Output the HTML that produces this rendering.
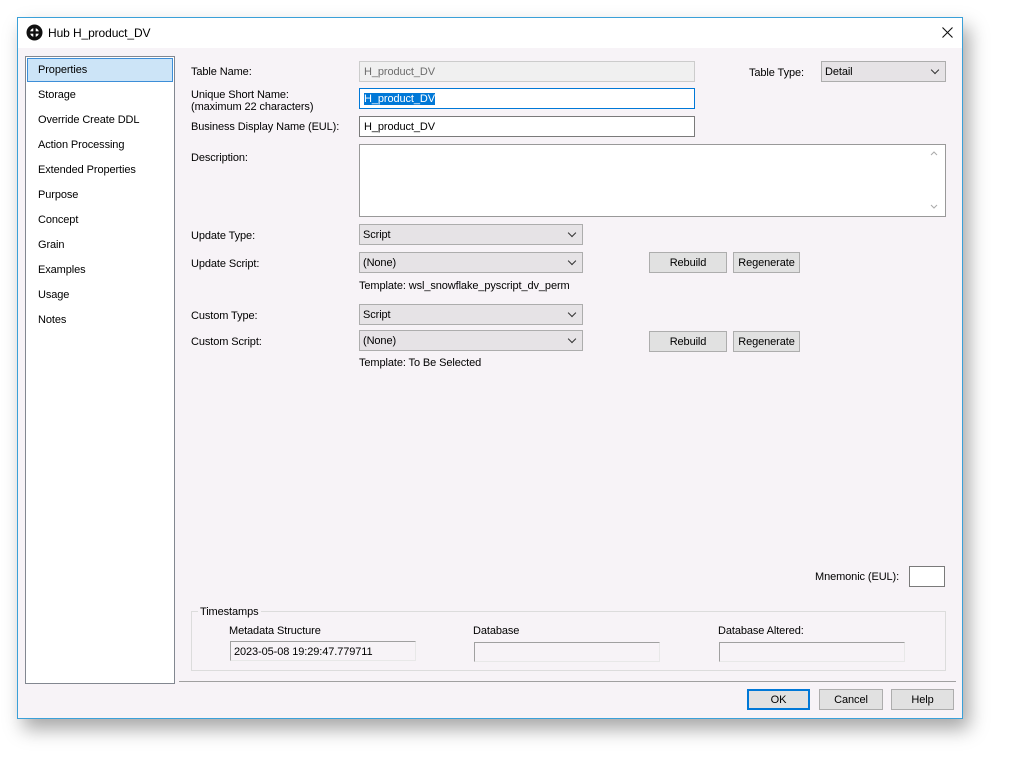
<!DOCTYPE html>
<html><head><style>
*{box-sizing:border-box;margin:0;padding:0}
body{width:1011px;height:767px;background:#fff;position:relative;overflow:hidden;font-family:"Liberation Sans",sans-serif;font-size:11px;color:#000;letter-spacing:-0.1px}
.a{position:absolute;white-space:nowrap}
#win{position:absolute;left:17px;top:17px;width:946px;height:702px;border:1px solid #3aa0d8;background:#f7f3f7;box-shadow:6px 10px 18px rgba(0,0,0,.35)}
.inp{position:absolute;background:#fff;border:1px solid #7a7a7a;height:21px;padding:4px 4px 0}
.sel{position:absolute;background:#e6e3e6;border:1px solid #adadad;height:21px;padding:4px 3px 0}
.sel:after{content:"";position:absolute;right:7px;top:5px;width:5px;height:5px;border-right:1.2px solid #333;border-bottom:1.2px solid #333;transform:rotate(45deg)}
.btn{position:absolute;background:#e1e1e1;border:1px solid #adadad;height:21px;text-align:center;padding-top:4px}
.ts{position:absolute;background:#f7f3f7;border:1px solid #a0a0a0;border-right-color:#e8e8e8;border-bottom-color:#e8e8e8;height:20px;padding:4px 3px 0}
.nav{position:absolute;left:20px}
</style></head><body>
<div id="win">
<div class="a" style="left:0;top:0;width:944px;height:30px;background:#fff"></div>
<svg class="a" style="left:8px;top:6px" width="17" height="17" viewBox="0 0 17 17"><circle cx="8.5" cy="8.5" r="8" fill="#111"/><circle cx="8.5" cy="8.5" r="4.5" fill="#fff"/><rect x="7.3" y="1" width="2.4" height="15" fill="#111"/><rect x="1" y="7.3" width="15" height="2.4" fill="#111"/></svg>
<div class="a" style="left:30px;top:8px;font-size:12px">Hub H_product_DV</div>
<svg class="a" style="left:924px;top:9px" width="11" height="11" viewBox="0 0 11 11"><path d="M0.5 0.5L10.5 10.5M10.5 0.5L0.5 10.5" stroke="#111" stroke-width="1.1"/></svg>

<div class="a" style="left:7px;top:38px;width:150px;height:628px;background:#fff;border:1px solid #828790"></div>
<div class="a" style="left:9px;top:40px;width:146px;height:24px;background:#cce4f7;border:1px solid #3d8ed8"></div>
<div class="nav a" style="top:46px">Properties</div>
<div class="nav a" style="top:71px">Storage</div>
<div class="nav a" style="top:96px">Override Create DDL</div>
<div class="nav a" style="top:121px">Action Processing</div>
<div class="nav a" style="top:146px">Extended Properties</div>
<div class="nav a" style="top:171px">Purpose</div>
<div class="nav a" style="top:196px">Concept</div>
<div class="nav a" style="top:221px">Grain</div>
<div class="nav a" style="top:246px">Examples</div>
<div class="nav a" style="top:271px">Usage</div>
<div class="nav a" style="top:296px">Notes</div>

<div class="a" style="left:173px;top:48px">Table Name:</div>
<div class="inp" style="left:341px;top:43px;width:336px;border-color:#ccc;background:#f0f0f0;color:#6d6d6d">H_product_DV</div>
<div class="a" style="left:731px;top:49px">Table Type:</div>
<div class="sel" style="left:803px;top:43px;width:125px">Detail</div>
<div class="a" style="left:173px;top:71px;line-height:12px">Unique Short Name:<br>(maximum 22 characters)</div>
<div class="inp" style="left:341px;top:70px;width:336px;border-color:#0078d7"><span style="background:#0078d7;color:#fff">H_product_DV</span></div>
<div class="a" style="left:173px;top:103px">Business Display Name (EUL):</div>
<div class="inp" style="left:341px;top:98px;width:336px">H_product_DV</div>
<div class="a" style="left:173px;top:134px">Description:</div>
<div class="inp" style="left:341px;top:126px;width:587px;height:73px;border-color:#999"></div>
<svg class="a" style="left:912px;top:133px" width="8" height="5"><path d="M1 4L4 1L7 4" stroke="#aaa" fill="none"/></svg>
<svg class="a" style="left:912px;top:186px" width="8" height="5"><path d="M1 1L4 4L7 1" stroke="#aaa" fill="none"/></svg>

<div class="a" style="left:173px;top:212px">Update Type:</div>
<div class="sel" style="left:341px;top:206px;width:224px">Script</div>
<div class="a" style="left:173px;top:240px">Update Script:</div>
<div class="sel" style="left:341px;top:234px;width:224px">(None)</div>
<div class="btn" style="left:631px;top:234px;width:78px">Rebuild</div>
<div class="btn" style="left:715px;top:234px;width:67px">Regenerate</div>
<div class="a" style="left:341px;top:262px">Template: wsl_snowflake_pyscript_dv_perm</div>

<div class="a" style="left:173px;top:292px">Custom Type:</div>
<div class="sel" style="left:341px;top:286px;width:224px">Script</div>
<div class="a" style="left:173px;top:318px">Custom Script:</div>
<div class="sel" style="left:341px;top:312px;width:224px">(None)</div>
<div class="btn" style="left:631px;top:313px;width:78px">Rebuild</div>
<div class="btn" style="left:715px;top:313px;width:67px">Regenerate</div>
<div class="a" style="left:341px;top:339px">Template: To Be Selected</div>

<div class="a" style="left:797px;top:553px">Mnemonic (EUL):</div>
<div class="a" style="left:891px;top:548px;width:36px;height:21px;background:#fff;border:1px solid #7a7a7a"></div>

<div class="a" style="left:173px;top:593px;width:755px;height:60px;border:1px solid #dcdcdc"></div>
<div class="a" style="left:180px;top:588px;background:#f7f3f7;padding:0 2px">Timestamps</div>
<div class="a" style="left:211px;top:607px">Metadata Structure</div>
<div class="ts" style="left:212px;top:623px;width:186px">2023-05-08 19:29:47.779711</div>
<div class="a" style="left:455px;top:607px">Database</div>
<div class="ts" style="left:456px;top:624px;width:186px"></div>
<div class="a" style="left:700px;top:607px">Database Altered:</div>
<div class="ts" style="left:701px;top:624px;width:186px"></div>

<div class="a" style="left:161px;top:663px;width:777px;height:1px;background:#a0a0a0"></div>
<div class="btn" style="left:729px;top:671px;width:63px;border:2px solid #0078d7;padding-top:3px">OK</div>
<div class="btn" style="left:801px;top:671px;width:64px">Cancel</div>
<div class="btn" style="left:873px;top:671px;width:63px">Help</div>
</div>
</body></html>
